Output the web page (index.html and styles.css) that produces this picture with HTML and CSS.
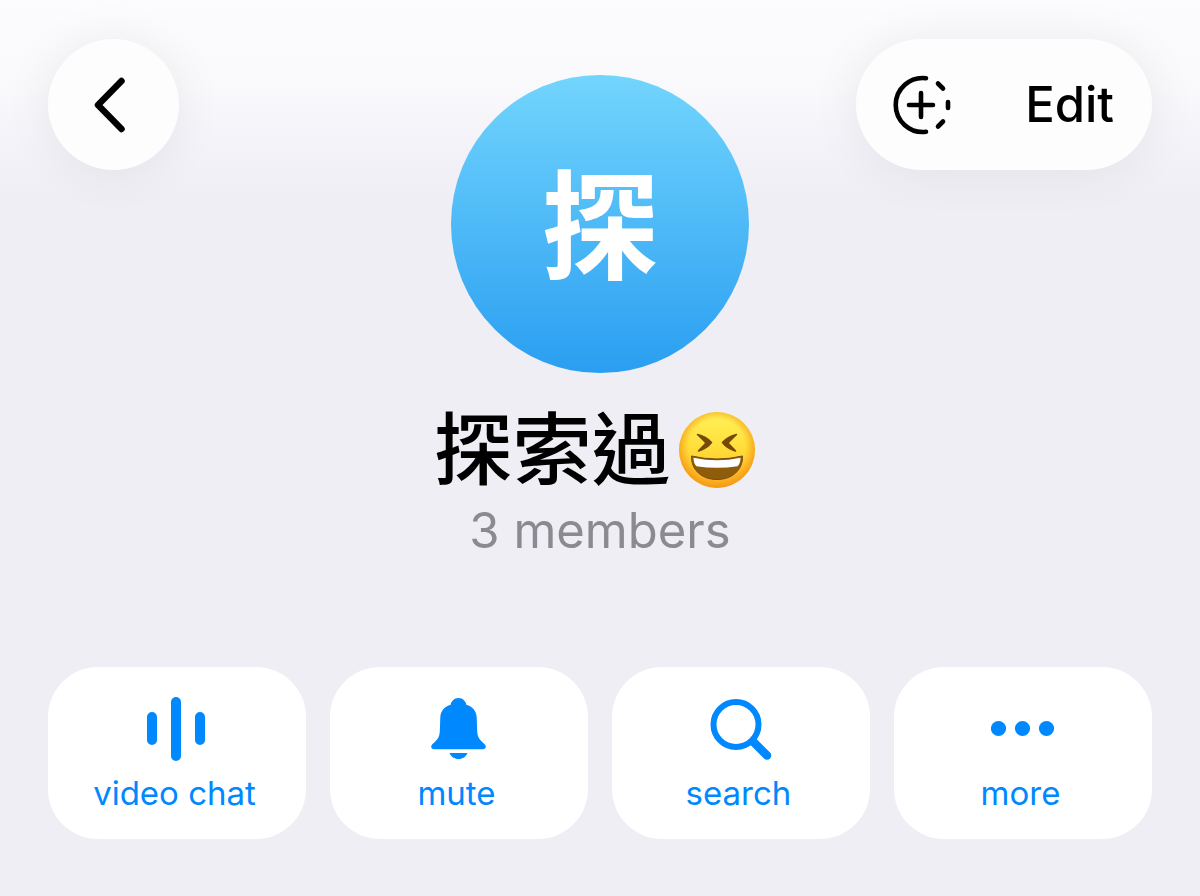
FILE: index.html
```html
<!DOCTYPE html>
<html lang="zh-Hant">
<head>
  <meta charset="UTF-8" />
  <meta name="viewport" content="width=device-width, initial-scale=1" />
  <title>Group Info</title>
  <link rel="stylesheet" href="styles.css">
</head>
<body>

  <header class="topbar">
    <button class="back-btn" aria-label="Back">
      <svg class="icon" viewBox="0 0 64 64" fill="none" stroke="currentColor" stroke-width="6.5" stroke-linecap="round" stroke-linejoin="round">
        <path d="M39.500 8 16 32l23.500 24" />
      </svg>
    </button>

    <div class="avatar">探</div>

    <div class="pill">
      <button class="pill-btn" aria-label="Add story">
        <svg class="icon" viewBox="0 0 64 64" fill="none" stroke="currentColor" stroke-width="4.6" stroke-linecap="round">
          <path d="M37 5.200A27 27 0 1 0 37 58.800M32 20v24M20 32h24" />
          <path d="M49 10.500l5 5M59 29v6M54 48.500l-5 5" />
        </svg>
      </button>
      <button class="pill-btn">Edit</button>
    </div>
  </header>

  <main>
    <h1 class="title">
      探索過
      <svg class="emoji" viewBox="0 0 76 76" role="img" aria-label="laughing">
        <defs>
          <linearGradient id="face" x1="0" y1="0" x2="0" y2="1">
            <stop offset="0" stop-color="#fff35a" />
            <stop offset=".5" stop-color="#ffdc38" />
            <stop offset="1" stop-color="#fdb52a" />
          </linearGradient>
          <radialGradient id="edge" cx=".5" cy=".47" r=".53">
            <stop offset=".7" stop-color="#f79a14" stop-opacity="0" />
            <stop offset="1" stop-color="#f2920f" stop-opacity=".85" />
          </radialGradient>
        </defs>
        <circle cx="38" cy="38" r="38" fill="url(#face)" />
        <circle cx="38" cy="38" r="38" fill="url(#edge)" />
        <g fill="#754a08" stroke="#754a08" stroke-width="1.5" stroke-linejoin="round">
          <path d="M18.500 22.500c5 1 10 3.500 14 8-3 4-7.500 7-13 8.500 2.500-3 5.500-5.500 7.500-8-2.500-3-5.500-5.500-8.500-8.500z" />
          <path d="M57.500 22.500c-5 1-10 3.500-14 8 3 4 7.500 7 13 8.500-2.500-3-5.500-5.500-7.500-8 2.500-3 5.500-5.500 8.500-8.500z" />
        </g>
        <path d="M12.500 44q25.500 6 51 0C64 58 53 67.500 38 67.500S12 58 12.500 44z" fill="#8f5c0c" stroke="#754a08" />
        <path d="M14.500 45.800q23.500 5 47 0c0 4-1 6.500-3 8.500q-20.500 3-41 0c-2-2-3-4.500-3-8.500z" fill="#fff" />
      </svg>
    </h1>
    <p class="members">3 members</p>

    <div class="actions">
      <button class="action">
        <svg class="icon" viewBox="0 0 64 64" fill="none" stroke="currentColor" stroke-width="10" stroke-linecap="round">
          <path d="M7 20v23M31 5v54M55 20v23" />
        </svg>
        <span>video chat</span>
      </button>
      <button class="action">
        <svg class="icon" viewBox="0 0 64 64" fill="currentColor">
          <path d="M31.500 1c4 0 7.200 2.800 7.800 6.800 6 1.700 10.200 6 10.400 12.700l.5 14c.2 5 2 8 5.300 10.700 2 1.700 3.300 3 3.300 4.500 0 1.500-1.200 2.500-3 2.500H7.200c-1.800 0-3-1-3-2.500 0-1.500 1.300-2.800 3.300-4.500 3.300-2.700 5-5.700 5.300-10.700l.5-14c.2-6.700 4.400-11 10.400-12.700C24.300 3.800 27.500 1 31.500 1z" />
          <path d="M22.500 56h18c-1.500 3.700-4.700 6-9 6s-7.500-2.300-9-6z" />
        </svg>
        <span>mute</span>
      </button>
      <button class="action">
        <svg class="icon" viewBox="0 0 64 64" fill="none" stroke="currentColor" stroke-linecap="round">
          <circle cx="27" cy="27.500" r="22.500" stroke-width="6" />
          <path d="M45 45.500 58 58.500" stroke-width="8.500" />
        </svg>
        <span>search</span>
      </button>
      <button class="action">
        <svg class="icon" viewBox="0 0 64 64" fill="currentColor">
          <circle cx="7.500" cy="31.500" r="7.600" />
          <circle cx="31.500" cy="31.500" r="7.600" />
          <circle cx="55.500" cy="31.500" r="7.600" />
        </svg>
        <span>more</span>
      </button>
    </div>
  </main>

</body>
</html>
```
FILE: styles.css
```css
body {
  margin: 0;
  min-height: 100vh;
  background: #efeef5 linear-gradient(#fcfcfe 0, #f9f9fc 90px, #f3f2f8 150px, #efeef5 200px) no-repeat;
  color: #000;
  font-family: Inter, "Noto Sans CJK TC", sans-serif;
}
button {
  border: none;
  padding: 0;
  background: none;
  color: inherit;
  font: inherit;
  cursor: pointer;
}
.icon {
  display: block;
  width: 64px;
  height: 64px;
}
.topbar {
  display: grid;
  grid-template-columns: 1fr auto 1fr;
  align-items: start;
  padding: 39px 48px 0;
}
.back-btn,
.pill {
  display: flex;
  align-items: center;
  height: 131px;
  border-radius: 66px;
  background: #fdfdfe;
  box-shadow: 0 2px 50px rgba(0, 0, 0, 0.07);
}
.back-btn {
  justify-content: center;
  width: 131px;
}
.avatar {
  display: flex;
  align-items: center;
  justify-content: center;
  box-sizing: border-box;
  width: 298px;
  height: 298px;
  margin-top: 36px;
  padding-top: 6px;
  border-radius: 50%;
  background: linear-gradient(#72d5fd, #2a9ef1);
  color: #fff;
  font-size: 118px;
  font-weight: 700;
  line-height: 1;
}
.pill {
  justify-self: end;
  gap: 72px;
  padding: 0 38px 0 33px;
  font-size: 49px;
  font-weight: 500;
}
main {
  padding: 0 48px 58px;
}
.title {
  display: flex;
  align-items: center;
  justify-content: center;
  gap: 8px;
  margin: 30px 0 0;
  padding-right: 12px;
  font-size: 79px;
  font-weight: 500;
  line-height: 94px;
}
.emoji {
  width: 76px;
  height: 76px;
}
.members {
  margin: 0;
  color: #8a8a90;
  font-size: 49px;
  line-height: 68px;
  text-align: center;
}
.actions {
  display: grid;
  grid-template-columns: repeat(4, 1fr);
  gap: 24px;
  margin-top: 102px;
}
.action {
  display: flex;
  flex-direction: column;
  align-items: center;
  gap: 10px;
  padding: 30px 0 24px;
  border-radius: 50px;
  background: #fff;
  color: #0088ff;
  font-size: 33px;
  line-height: 44px;
}
.action span {
  padding-right: 5px;
}
```
